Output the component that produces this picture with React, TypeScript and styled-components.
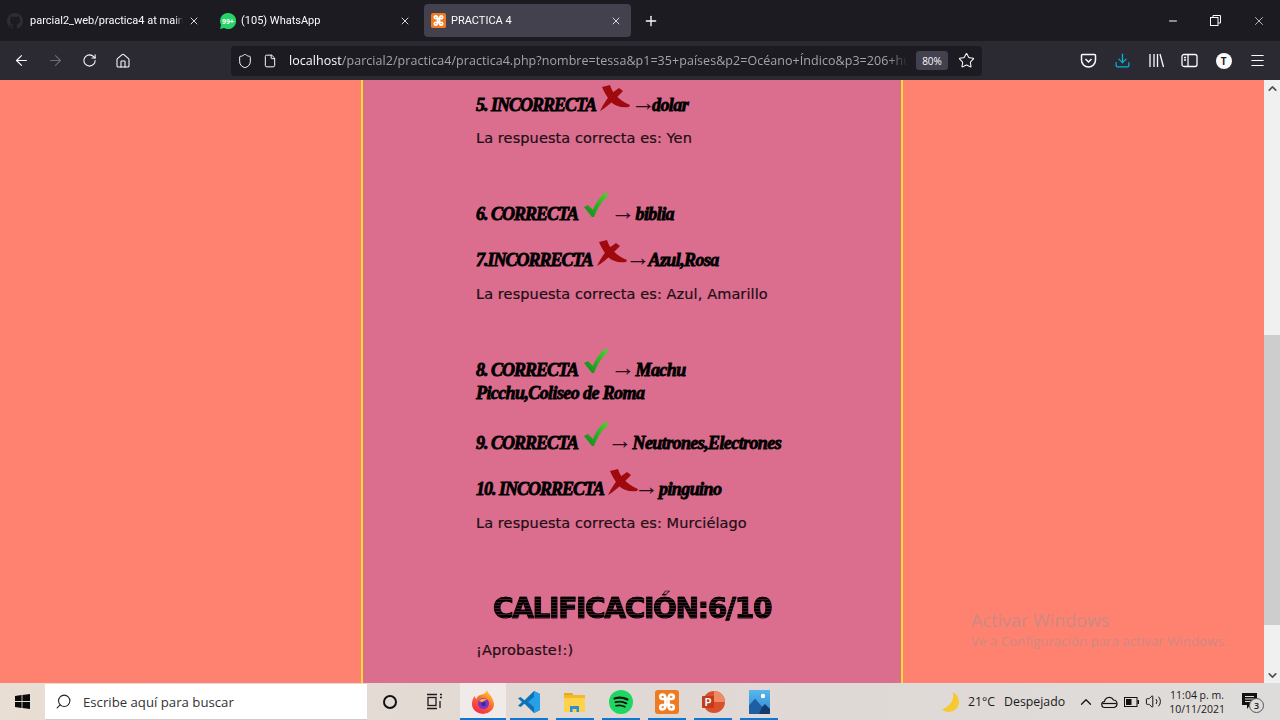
import styled, { createGlobalStyle } from "styled-components";
import {
  ArrowLeft,
  ArrowRight,
  ChevronDown,
  ChevronUp,
  Download,
  File,
  Home,
  Menu,
  Minus,
  Plus,
  RotateCw,
  Search,
  Shield,
  Star,
  Volume2,
  X,
} from "lucide-react";

const GlobalStyle = createGlobalStyle`
  html, body {
    margin: 0;
    padding: 0;
    overflow: hidden;
  }
  * {
    box-sizing: border-box;
  }
`;

// --- Drawn icons ---

const CrossMark = () => (
  <CrossSvg width="30" height="27" viewBox="0 0 30 27">
    <path fill="#a00a0e" d="M2 2 L10 0 C12 7 18 15 30 20 L29 22 C21 23 15 21 11 17 C7 12 4 7 2 2Z" />
    <path fill="#a00a0e" d="M19 3 L23 6 C17 12 9 21 0 26 C3 20 7 13 12 8Z" />
  </CrossSvg>
);

const CheckMark = () => (
  <CheckSvg width="25" height="26" viewBox="0 0 25 26">
    <defs>
      <linearGradient id="tick" x1="0" y1="1" x2="1" y2="0">
        <stop offset="0" stopColor="#08881a" />
        <stop offset="1" stopColor="#4fd62f" />
      </linearGradient>
    </defs>
    <path fill="url(#tick)" d="M1 15 L5 13 L10 18 C13 10 18 4 23 0 L25 4 C19 9 15 15 11 25 L9 25Z" />
  </CheckSvg>
);

const XamppLogo = ({ size }: { size: number }) => (
  <svg width={size} height={size} viewBox="0 0 16 16">
    <rect width="16" height="16" rx="2" fill="#ee7a22" />
    <path
      fill="none"
      stroke="#fff"
      strokeWidth="1.8"
      d="M5 3 C3 3 3 6 5 6 L11 6 C13 6 13 3 11 3 C9.5 3 9 4.5 9 6 L9 10 C9 11.5 9.5 13 11 13 C13 13 13 10 11 10 L5 10 C3 10 3 13 5 13 C6.5 13 7 11.5 7 10 L7 6 C7 4.5 6.5 3 5 3Z"
    />
  </svg>
);

const GithubMark = () => (
  <svg width="16" height="16" viewBox="0 0 16 16">
    <path
      fill="#2e2d33"
      d="M8 0C3.6 0 0 3.6 0 8c0 3.5 2.3 6.5 5.5 7.6.4.1.5-.2.5-.4v-1.4c-2.2.5-2.7-1-2.7-1-.4-.9-.9-1.2-.9-1.2-.7-.5.1-.5.1-.5.8.1 1.2.8 1.2.8.7 1.2 1.9.9 2.3.7.1-.5.3-.9.5-1.1-1.8-.2-3.6-.9-3.6-4 0-.9.3-1.6.8-2.1-.1-.2-.4-1 .1-2.1 0 0 .7-.2 2.2.8a7.6 7.6 0 0 1 4 0c1.5-1 2.2-.8 2.2-.8.4 1.1.2 1.9.1 2.1.5.5.8 1.2.8 2.1 0 3.1-1.9 3.8-3.7 4 .3.3.6.8.6 1.5v2.2c0 .2.1.5.6.4A8 8 0 0 0 16 8c0-4.4-3.6-8-8-8Z"
    />
  </svg>
);

const WhatsappLogo = () => (
  <svg width="16" height="16" viewBox="0 0 16 16">
    <path fill="#25d366" d="M8 0a8 8 0 0 0-6.900 12L0 16l4.100-1.100A8 8 0 1 0 8 0Z" />
    <text x="8" y="10.5" textAnchor="middle" fontSize="7" fontWeight="700" fontFamily="Liberation Sans, sans-serif" fill="#fff">
      99+
    </text>
  </svg>
);

const PocketIcon = () => (
  <svg width="17" height="17" viewBox="0 0 17 17" fill="none" stroke="#fbfbfe" strokeWidth="1.5">
    <path d="M2.5 2.5h12a1 1 0 0 1 1 1V8a7 7 0 0 1-14 0V3.500a1 1 0 0 1 1-1Z" />
    <path d="M5.5 7l3 3 3-3" />
  </svg>
);

const LibraryIcon = () => (
  <svg width="17" height="17" viewBox="0 0 17 17" fill="none" stroke="#fbfbfe" strokeWidth="1.3">
    <path d="M2 2v13M6 2v13M9.5 2v13M12 2l3.500 13" />
  </svg>
);

const SidebarIcon = () => (
  <svg width="17" height="15" viewBox="0 0 17 15" fill="none" stroke="#fbfbfe" strokeWidth="1.3">
    <rect x="1" y="1.5" width="15" height="12" rx="2" />
    <path d="M7 1.5v12M3 4.5h2M3 7h2" />
  </svg>
);

const RestoreIcon = () => (
  <svg width="11" height="11" viewBox="0 0 11 11" fill="none" stroke="#fbfbfe" strokeWidth="1">
    <rect x="0.5" y="2.5" width="7.5" height="8" />
    <path d="M3 2.5V0.5h7.5V8H8" />
  </svg>
);

const WindowsLogo = () => (
  <svg width="15" height="15" viewBox="0 0 15 15" fill="#0b0b0b">
    <path d="M0 2l6.600-1v6H0zM7.400.9L15 0v7H7.400zM0 8h6.600v6L0 13zM7.400 8H15v7l-7.600-1z" />
  </svg>
);

const TaskViewIcon = () => (
  <svg width="17" height="17" viewBox="0 0 17 17" fill="none" stroke="#1a1a1a" strokeWidth="1.3">
    <path d="M1 1.5h10M1 15.500h10" />
    <rect x="2" y="4.5" width="8" height="8" />
    <path d="M14 1.5h2M14 4.5h2M14 8v7" />
  </svg>
);

const FirefoxLogo = () => (
  <svg width="22" height="24" viewBox="0 0 22 24">
    <defs>
      <linearGradient id="fx" x1="0.8" y1="0" x2="0.2" y2="1">
        <stop offset="0" stopColor="#ffd43a" />
        <stop offset="0.45" stopColor="#ff6b2c" />
        <stop offset="1" stopColor="#f0244f" />
      </linearGradient>
    </defs>
    <path fill="url(#fx)" d="M15 0c.5 3 3 4 4.500 7 2 3.500 2.500 6.500 2.500 7a11 10 0 0 1-22 0c0-3.500 1-6 3-8 0 1.500.5 2.500 1.500 3 .8-3 3-4 5.500-4.500C12 4 14 3 15 0Z" />
    <circle cx="11.5" cy="13.5" r="5.5" fill="#7a36c8" />
    <path fill="#ffb02e" d="M7 11c2-2.500 6-3 8-1-2-.3-3.500.6-4 2.500z" />
    <circle cx="11.5" cy="14" r="2.3" fill="#4b1fa3" />
  </svg>
);

const VscodeLogo = () => (
  <svg width="24" height="24" viewBox="0 0 24 24">
    <path fill="#0f72b8" d="M17 1l6 3v16l-6 3L7.500 13.800 3.500 17 1 15.700 5 12 1 8.300 3.500 7l4 3.200z" />
    <path fill="#27a0e8" d="M17 1l6 3v16l-6 3zM17 7l-6 5 6 5z" fillRule="evenodd" />
  </svg>
);

const FolderLogo = () => (
  <svg width="22" height="20" viewBox="0 0 22 20">
    <path fill="#e9a916" d="M0 1h8l2 2.500H0z" />
    <rect y="3" width="21" height="17" fill="#ffd24c" />
    <rect y="3" width="21" height="3" fill="#f2b92a" />
    <path fill="#2c8fd6" d="M6 20v-6h9v6h-2.500v-3h-4v3z" />
  </svg>
);

const SpotifyLogo = () => (
  <svg width="24" height="24" viewBox="0 0 24 24">
    <circle cx="12" cy="12" r="12" fill="#1ed760" />
    <path fill="none" stroke="#111" strokeLinecap="round" strokeWidth="2.2" d="M5.500 8.500c4-1.200 9-1 13 1" />
    <path fill="none" stroke="#111" strokeLinecap="round" strokeWidth="1.9" d="M6.500 12.200c3.500-1 7.500-.7 10.800 1.100" />
    <path fill="none" stroke="#111" strokeLinecap="round" strokeWidth="1.6" d="M7 15.800c3-.8 6-.5 8.800 1" />
  </svg>
);

const PowerpointLogo = () => (
  <svg width="24" height="24" viewBox="0 0 24 24">
    <circle cx="13" cy="12" r="11" fill="#d9512c" />
    <path fill="#f08a65" d="M13 1a11 11 0 0 1 11 11H13z" />
    <rect x="1" y="6" width="12" height="12" rx="1" fill="#c13b1b" />
    <text x="7" y="16" textAnchor="middle" fontSize="10" fontWeight="700" fontFamily="Liberation Sans, sans-serif" fill="#fff">
      P
    </text>
  </svg>
);

const PhotosLogo = () => (
  <svg width="21" height="24" viewBox="0 0 21 24">
    <defs>
      <linearGradient id="sky" x1="0" y1="0" x2="0" y2="1">
        <stop offset="0" stopColor="#58b7ee" />
        <stop offset="1" stopColor="#2f86cf" />
      </linearGradient>
    </defs>
    <rect width="21" height="24" fill="url(#sky)" />
    <circle cx="14" cy="6" r="2.2" fill="#fff" />
    <path fill="#123a6e" d="M0 24v-8l6-7 7 8 3-3 5 5v5z" />
    <path fill="#1e5fa4" d="M6 9l7 8-3 7H0v-8z" />
  </svg>
);

const MoonIcon = () => (
  <svg width="17" height="20" viewBox="0 0 17 20">
    <path fill="#f6c92e" d="M11 0c1.500 7-2 14-11 17.500C2 19 4 20 6 20c6 0 11-4 11-10 0-4-2.500-8-6-10Z" />
  </svg>
);

const CloudIcon = () => (
  <svg width="17" height="14" viewBox="0 0 17 14" fill="none" stroke="#111" strokeWidth="1.2">
    <path d="M4 12.500a3 3 0 0 1-.5-6A4.800 4.800 0 0 1 12.500 5a3.800 3.800 0 0 1 .5 7.500z" />
    <path d="M1.500 8.500h14" />
  </svg>
);

const BatteryIcon = () => (
  <svg width="15" height="10" viewBox="0 0 15 10">
    <rect x="0.5" y="0.5" width="12.5" height="9" fill="none" stroke="#111" />
    <rect x="2" y="2" width="5.5" height="6" fill="#111" />
    <rect x="13.5" y="3" width="1.5" height="4" fill="#111" />
  </svg>
);

const NotificationIcon = () => (
  <svg width="15" height="17" viewBox="0 0 15 17">
    <path fill="#111" d="M0 0h15v12H8l-3 4v-4H0z" />
    <path stroke="#ddd" d="M3 3.500h9M3 6h9M3 8.500h6" />
  </svg>
);

// --- Page ---

export default function App() {
  return (
    <>
      <GlobalStyle />
      <Screen>
        <TabBar>
          <Tab $width={209}>
            <GithubMark />
            <TabTitle $gap={2}>parcial2_web/practica4 at main</TabTitle>
            <X size={12} color="#d6d6da" />
          </Tab>
          <Tab $width={207}>
            <WhatsappLogo />
            <TabTitle>(105) WhatsApp</TabTitle>
            <X size={12} color="#d6d6da" />
          </Tab>
          <Tab $width={207} $active>
            <XamppLogo size={15} />
            <TabTitle>PRACTICA 4</TabTitle>
            <X size={12} color="#d6d6da" />
          </Tab>
          <NewTab>
            <Plus size={16} color="#fbfbfe" />
          </NewTab>
          <WindowControls>
            <WindowButton>
              <Minus size={12} color="#fbfbfe" />
            </WindowButton>
            <WindowButton>
              <RestoreIcon />
            </WindowButton>
            <WindowButton>
              <X size={14} color="#fbfbfe" strokeWidth={1.2} />
            </WindowButton>
          </WindowControls>
        </TabBar>

        <Toolbar>
          <NavGroup>
            <NavButton><ArrowLeft size={17} color="#fbfbfe" strokeWidth={1.6} /></NavButton>
            <NavButton><ArrowRight size={17} color="#6b6a73" strokeWidth={1.6} /></NavButton>
            <NavButton><RotateCw size={15} color="#fbfbfe" strokeWidth={1.7} /></NavButton>
            <NavButton><Home size={16} color="#fbfbfe" strokeWidth={1.6} /></NavButton>
          </NavGroup>
          <UrlBar>
            <Shield size={16} color="#fbfbfe" strokeWidth={1.5} />
            <File size={14} color="#fbfbfe" strokeWidth={1.7} />
            <UrlText>
              <strong>localhost</strong>/parcial2/practica4/practica4.php?nombre=tessa&amp;p1=35+países&amp;p2=Océano+Índico&amp;p3=206+huesos
            </UrlText>
            <ZoomBadge>80%</ZoomBadge>
            <Star size={17} color="#fbfbfe" strokeWidth={1.5} />
          </UrlBar>
          <ToolGroup>
            <ToolButton><PocketIcon /></ToolButton>
            <ToolButton><Download size={17} color="#00b8e0" strokeWidth={1.7} /></ToolButton>
            <ToolButton><LibraryIcon /></ToolButton>
            <ToolButton><SidebarIcon /></ToolButton>
            <ToolButton><Avatar>T</Avatar></ToolButton>
            <ToolButton><Menu size={17} color="#fbfbfe" strokeWidth={1.6} /></ToolButton>
          </ToolGroup>
        </Toolbar>

        <Viewport>
          <Page>
            <Panel>
              <Answer>
                <Verdict>5. INCORRECTA</Verdict><CrossMark /><Arrow $left={1} $right={-4}>→</Arrow>dolar
              </Answer>
              <Note $gap={11}>La respuesta correcta es: Yen</Note>

              <Answer $gap={55}>
                <Verdict>6. CORRECTA </Verdict><CheckMark /><Arrow $left={3}>→</Arrow>biblia
              </Answer>

              <Answer $gap={23}>
                <Verdict>7.INCORRECTA</Verdict><CrossMark /><Arrow $left={-1} $right={-2}>→</Arrow>Azul,Rosa
              </Answer>
              <Note $gap={12}>La respuesta correcta es: Azul, Amarillo</Note>

              <Answer $gap={55}>
                <Verdict>8. CORRECTA </Verdict><CheckMark /><Arrow $left={3}>→</Arrow>Machu Picchu,Coliseo de Roma
              </Answer>

              <Answer $gap={27}>
                <Verdict>9. CORRECTA </Verdict><CheckMark /><Arrow>→</Arrow>Neutrones,Electrones
              </Answer>

              <Answer $gap={23}>
                <Verdict>10. INCORRECTA</Verdict><CrossMark /><Arrow $left={-4}>→</Arrow>pinguino
              </Answer>
              <Note $gap={12}>La respuesta correcta es: Murciélago</Note>

              <Score>CALIFICACIÓN:6/10</Score>
              <Note $gap={16}>¡Aprobaste!:)</Note>
            </Panel>
          </Page>
          <Scrollbar>
            <ScrollArrow><ChevronUp size={13} strokeWidth={3} color="#505050" /></ScrollArrow>
            <ScrollTrack>
              <ScrollThumb />
            </ScrollTrack>
            <ScrollArrow><ChevronDown size={13} strokeWidth={3} color="#505050" /></ScrollArrow>
          </Scrollbar>
          <Watermark>
            <WatermarkTitle>Activar Windows</WatermarkTitle>
            <WatermarkText>Ve a Configuración para activar Windows.</WatermarkText>
          </Watermark>
        </Viewport>

        <Taskbar>
          <StartButton><WindowsLogo /></StartButton>
          <SearchBox>
            <SearchGlyph size={17} color="#222" strokeWidth={1.5} />
            <SearchText>Escribe aquí para buscar</SearchText>
          </SearchBox>
          <CortanaButton><CortanaRing /></CortanaButton>
          <TaskViewButton><TaskViewIcon /></TaskViewButton>
          <AppButton $active><FirefoxLogo /></AppButton>
          <AppButton><VscodeLogo /></AppButton>
          <AppButton><FolderLogo /></AppButton>
          <AppButton><SpotifyLogo /></AppButton>
          <AppButton><XamppLogo size={24} /></AppButton>
          <AppButton><PowerpointLogo /></AppButton>
          <AppButton><PhotosLogo /></AppButton>
          <Weather>
            <MoonIcon />
            <WeatherText>21°C</WeatherText>
            <WeatherText>Despejado</WeatherText>
          </Weather>
          <Tray>
            <ChevronUp size={18} color="#111" strokeWidth={1.6} />
            <CloudIcon />
            <BatteryIcon />
            <Volume2 size={17} color="#111" strokeWidth={1.4} />
          </Tray>
          <Clock>
            <span>11:04 p. m.</span>
            <span>10/11/2021</span>
          </Clock>
          <Notifications>
            <NotificationIcon />
            <NotificationCount>3</NotificationCount>
          </Notifications>
        </Taskbar>
      </Screen>
    </>
  );
}

// --- Styles ---

const Screen = styled.div`
  display: flex;
  flex-direction: column;
  width: 1280px;
  height: 720px;
  overflow: hidden;
  font-family: "Open Sans", "Liberation Sans", sans-serif;
`;

const TabBar = styled.div`
  display: flex;
  align-items: center;
  gap: 4px;
  height: 41px;
  flex-shrink: 0;
  background: #1c1b22;
  color: #fbfbfe;
`;

const Tab = styled.div<{ $width: number; $active?: boolean }>`
  display: flex;
  align-items: center;
  gap: 5px;
  width: ${(p) => p.$width}px;
  height: 33px;
  padding: 0 9px 0 7px;
  border-radius: 4px;
  background: ${(p) => (p.$active ? "#42414d" : "transparent")};
`;

const TabTitle = styled.span<{ $gap?: number }>`
  flex: 1;
  min-width: 0;
  margin-left: ${(p) => p.$gap ?? 0}px;
  overflow: hidden;
  white-space: nowrap;
  font-family: Roboto, sans-serif;
  font-size: 11px;
  -webkit-mask-image: linear-gradient(to left, transparent 0, #000 8px);
  mask-image: linear-gradient(to left, transparent 0, #000 8px);
`;

const NewTab = styled.div`
  display: flex;
  align-items: center;
  justify-content: center;
  width: 40px;
  margin-left: -4px;
`;

const WindowControls = styled.div`
  display: flex;
  margin-left: auto;
`;

const WindowButton = styled.div`
  display: flex;
  align-items: center;
  justify-content: center;
  width: 43px;
  height: 41px;
`;

const Toolbar = styled.div`
  display: flex;
  align-items: center;
  height: 39px;
  flex-shrink: 0;
  padding-left: 5px;
  background: #2b2a33;
`;

const NavGroup = styled.div`
  display: flex;
  width: 226px;
`;

const NavButton = styled.div`
  display: flex;
  align-items: center;
  justify-content: center;
  width: 33.7px;
  height: 30px;
`;

const UrlBar = styled.div`
  display: flex;
  align-items: center;
  width: 751px;
  height: 30px;
  padding: 0 7px 0 6px;
  gap: 10px;
  border-radius: 4px;
  background: #1c1b22;
`;

const UrlText = styled.div`
  flex: 1;
  min-width: 0;
  margin-left: 2px;
  margin-right: -2px;
  overflow: hidden;
  white-space: nowrap;
  font-size: 12.5px;
  letter-spacing: 0.05px;
  color: #a3a3a8;
  -webkit-mask-image: linear-gradient(to left, transparent 0, #000 20px);
  mask-image: linear-gradient(to left, transparent 0, #000 20px);

  strong {
    font-weight: 400;
    color: #fbfbfe;
  }
`;

const ZoomBadge = styled.div`
  display: flex;
  align-items: center;
  justify-content: center;
  width: 32px;
  height: 19px;
  border-radius: 3px;
  background: #42414d;
  color: #fbfbfe;
  font-size: 10px;
`;

const ToolGroup = styled.div`
  display: flex;
  margin-left: 90px;
`;

const ToolButton = styled.div`
  display: flex;
  align-items: center;
  justify-content: center;
  width: 33.7px;
  height: 30px;
`;

const Avatar = styled.div`
  display: flex;
  align-items: center;
  justify-content: center;
  width: 16px;
  height: 16px;
  border-radius: 50%;
  background: #fbfbfe;
  color: #1c1b22;
  font-size: 10px;
  font-weight: 700;
`;

const Viewport = styled.div`
  position: relative;
  display: flex;
  flex: 1;
  min-height: 0;
  overflow: hidden;
`;

const Page = styled.div`
  flex: 1;
  min-width: 0;
  background: #ff8170;
`;

const Panel = styled.div`
  display: flow-root;
  width: 542px;
  height: 100%;
  margin: 0 auto;
  padding: 14px 110px 0 113px;
  border-left: 2px solid #fbdc2c;
  border-right: 2px solid #fbdc2c;
  background: #db6d8f;
  color: #0a0508;
`;

const Answer = styled.h3<{ $gap?: number }>`
  margin: ${(p) => p.$gap ?? 0}px 0 0;
  font-family: "Liberation Serif", serif;
  font-size: 18px;
  font-style: italic;
  font-weight: 700;
  line-height: 23px;
  letter-spacing: -0.6px;
  -webkit-text-stroke: 0.8px #000;
  color: #000;
`;

const Verdict = styled.span`
  letter-spacing: -1px;
`;

const CrossSvg = styled.svg`
  margin: -24px 0 0 4px;
  vertical-align: -1px;
`;

const CheckSvg = styled.svg`
  margin: -24px 0 0 2px;
  vertical-align: 2px;
`;

const Arrow = styled.span<{ $left?: number; $right?: number }>`
  margin-left: ${(p) => p.$left ?? 0}px;
  margin-right: ${(p) => p.$right ?? 0}px;
  font-family: "Liberation Sans", sans-serif;
  font-size: 25px;
  font-style: normal;
  font-weight: 400;
  line-height: 0;
  letter-spacing: 0;
  -webkit-text-stroke: 0;
  color: #2a0a18;
`;

const Note = styled.p<{ $gap?: number }>`
  margin: ${(p) => p.$gap ?? 0}px 0 0;
  font-family: "DejaVu Sans", sans-serif;
  font-size: 14.5px;
  line-height: 20px;
  letter-spacing: 0.1px;
  -webkit-text-stroke: 0.2px #1d0d14;
  color: #1d0d14;
  white-space: nowrap;
`;

const Score = styled.h1`
  width: 538px;
  height: 30px;
  margin: 61px 0 0 -113px;
  font-family: "DejaVu Sans", sans-serif;
  font-size: 28px;
  font-weight: 700;
  line-height: 30px;
  letter-spacing: -1.3px;
  text-align: center;
  white-space: nowrap;
  background: repeating-linear-gradient(#000 0 2px, #4a1c2c 2px 3px);
  -webkit-background-clip: text;
  background-clip: text;
  -webkit-text-fill-color: transparent;
  -webkit-text-stroke: 0.7px #000;
`;

const Scrollbar = styled.div`
  display: flex;
  flex-direction: column;
  width: 16px;
  flex-shrink: 0;
  background: #f0f0f0;
`;

const ScrollArrow = styled.div`
  display: flex;
  align-items: center;
  justify-content: center;
  height: 16px;
  flex-shrink: 0;
`;

const ScrollTrack = styled.div`
  flex: 1;
  padding-top: 239px;
`;

const ScrollThumb = styled.div`
  height: 290px;
  background: #cdcdcd;
`;

const Watermark = styled.div`
  position: absolute;
  left: 971px;
  top: 529px;
  color: rgba(150, 150, 150, 0.5);
  white-space: nowrap;
`;

const WatermarkTitle = styled.div`
  font-size: 18px;
  line-height: 22px;
`;

const WatermarkText = styled.div`
  font-size: 13.3px;
  line-height: 20px;
`;

const Taskbar = styled.div`
  display: flex;
  align-items: stretch;
  height: 37px;
  flex-shrink: 0;
  background: linear-gradient(to right, #e8ded3, #e0d8d4 50%, #dedcda);
  color: #1a1a1a;
`;

const StartButton = styled.div`
  display: flex;
  align-items: center;
  justify-content: center;
  width: 45px;
`;

const SearchBox = styled.div`
  display: flex;
  align-items: center;
  gap: 11px;
  width: 322px;
  padding-left: 10px;
  margin-top: 1px;
  border-bottom: 1px solid #ccc;
  background: #fff;
`;

const SearchGlyph = styled(Search)`
  transform: scaleX(-1);
`;

const SearchText = styled.span`
  font-size: 13.2px;
  color: #333;
`;

const CortanaButton = styled.div`
  display: flex;
  align-items: center;
  justify-content: center;
  width: 46px;
`;

const CortanaRing = styled.div`
  width: 14px;
  height: 14px;
  border: 2.5px solid #111;
  border-radius: 50%;
`;

const TaskViewButton = styled(CortanaButton)`
  width: 42px;
  margin-right: 5px;
`;

const AppButton = styled.div<{ $active?: boolean }>`
  position: relative;
  display: flex;
  align-items: center;
  justify-content: center;
  width: 46px;
  background: ${(p) => (p.$active ? "#f0ebe8" : "transparent")};

  &::after {
    content: "";
    position: absolute;
    left: ${(p) => (p.$active ? 0 : 4)}px;
    right: ${(p) => (p.$active ? 0 : 4)}px;
    bottom: 0;
    height: 2px;
    background: #0a78d4;
  }
`;

const Weather = styled.div`
  display: flex;
  align-items: center;
  margin-left: 160px;
  gap: 9px;
`;

const WeatherText = styled.span`
  font-size: 12.3px;
  white-space: nowrap;
`;

const Tray = styled.div`
  display: flex;
  align-items: center;
  gap: 6px;
  margin-left: 12px;
`;

const Clock = styled.div`
  display: flex;
  flex-direction: column;
  align-items: center;
  justify-content: center;
  margin-left: 5px;
  width: 60px;
  font-size: 10.5px;
  line-height: 14px;
  white-space: nowrap;
`;

const Notifications = styled.div`
  position: relative;
  display: flex;
  align-items: center;
  margin-left: 15px;
`;

const NotificationCount = styled.div`
  position: absolute;
  left: 7px;
  top: 15px;
  display: flex;
  align-items: center;
  justify-content: center;
  width: 15px;
  height: 15px;
  border: 1px solid #555;
  border-radius: 50%;
  background: #ddd;
  font-size: 9px;
  font-weight: 600;
`;
